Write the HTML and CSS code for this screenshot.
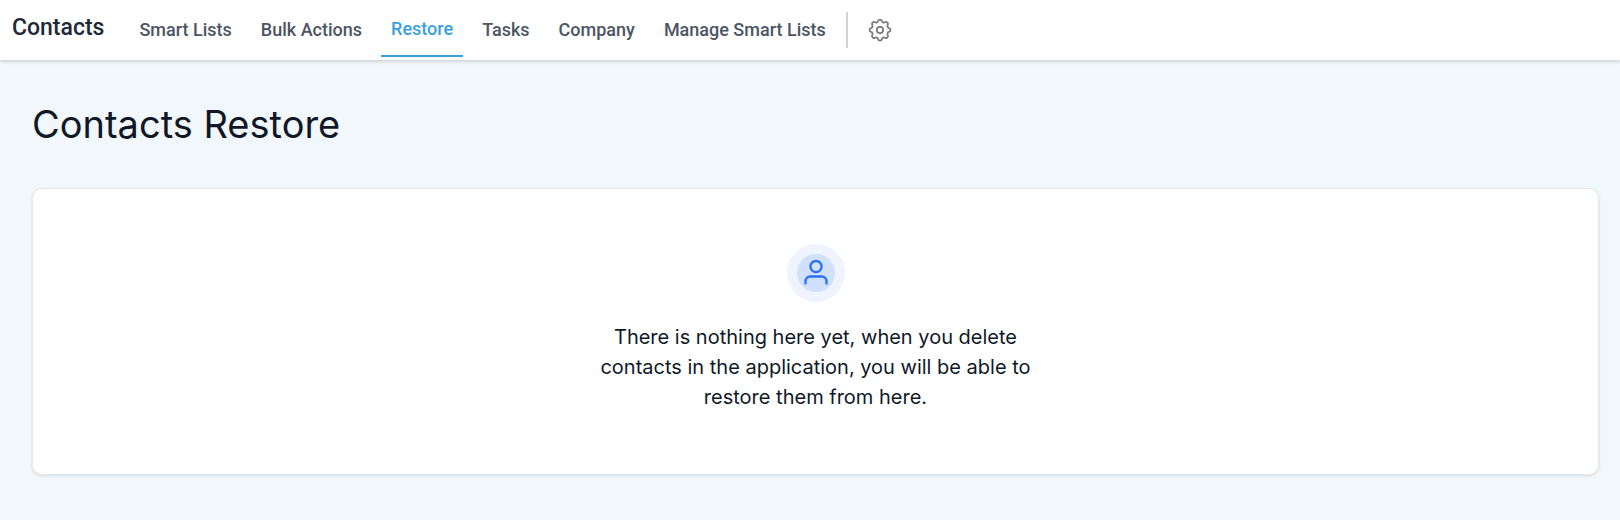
FILE: index.html
```html
<!DOCTYPE html>
<html lang="en">
<head>
    <title>Contacts Restore</title>
    <meta charset="UTF-8">
    <meta name="viewport" content="width=device-width, initial-scale=1">
    <link rel="stylesheet" href="styles.css">
</head>
<body>
    <header class="topbar">
        <span class="topbar-title">Contacts</span>
        <nav class="topbar-nav">
            <a href="#" class="nav-link">Smart Lists</a>
            <a href="#" class="nav-link">Bulk Actions</a>
            <a href="#" class="nav-link active" aria-current="page">Restore</a>
            <a href="#" class="nav-link">Tasks</a>
            <a href="#" class="nav-link">Company</a>
            <a href="#" class="nav-link">Manage Smart Lists</a>
        </nav>
        <button type="button" class="settings-btn" aria-label="Settings">
            <svg width="28" height="28" viewBox="0 0 24 24" fill="none" stroke="currentColor" stroke-width="1.5" stroke-linecap="round" stroke-linejoin="round">
                <path d="M10.325 4.317c.426-1.756 2.924-1.756 3.35 0a1.724 1.724 0 002.573 1.066c1.543-.94 3.31.826 2.37 2.37a1.724 1.724 0 001.065 2.572c1.756.426 1.756 2.924 0 3.35a1.724 1.724 0 00-1.066 2.573c.94 1.543-.826 3.31-2.37 2.37a1.724 1.724 0 00-2.572 1.065c-.426 1.756-2.924 1.756-3.35 0a1.724 1.724 0 00-2.573-1.066c-1.543.94-3.31-.826-2.37-2.37a1.724 1.724 0 00-1.065-2.572c-1.756-.426-1.756-2.924 0-3.35a1.724 1.724 0 001.066-2.573c-.94-1.543.826-3.31 2.37-2.37.996.608 2.296.07 2.572-1.065z"/>
                <circle cx="12" cy="12" r="2.7"/>
            </svg>
        </button>
    </header>

    <main class="content">
        <h1 class="page-title">Contacts Restore</h1>

        <section class="card">
            <div class="empty-icon">
                <svg width="28" height="28" viewBox="0 0 24 24" fill="none" stroke="currentColor" stroke-width="2" stroke-linecap="round" stroke-linejoin="round">
                    <path d="M21 21v-2a4 4 0 0 0-4-4H7a4 4 0 0 0-4 4v2"/>
                    <circle cx="12" cy="6.5" r="4.8"/>
                </svg>
            </div>
            <p class="empty-text">There is nothing here yet, when you delete contacts in the application, you will be able to restore them from here.</p>
        </section>
    </main>
</body>
</html>
```
FILE: styles.css
```css
* {
    box-sizing: border-box;
}

body {
    margin: 0;
    background: #f1f7fa;
    color: #101828;
    font-family: Inter, "Liberation Sans", sans-serif;
}

/* top bar */
.topbar {
    display: flex;
    align-items: center;
    height: 60px;
    padding-left: 12px;
    background: #fff;
    box-shadow: 0 1px 4px rgba(0, 0, 0, 0.2);
    font-family: Roboto, "Liberation Sans", sans-serif;
}

.topbar-title {
    padding-bottom: 6px;
    margin-right: 25px;
    color: #1f2937;
    font-size: 23px;
    font-weight: 500;
}

.topbar-nav {
    display: flex;
    gap: 9px;
    padding-right: 10px;
    border-right: 2px solid #d1d5db;
    height: 36px;
}

.nav-link {
    height: 45px;
    padding: 0 10px;
    color: #4b5563;
    font-size: 18px;
    font-weight: 500;
    line-height: 36px;
    text-decoration: none;
    white-space: nowrap;
}

.nav-link.active {
    border-bottom: 2px solid #38a0db;
    color: #38a0db;
    line-height: 34px;
}

.settings-btn {
    display: flex;
    margin-left: 18px;
    padding: 0;
    border: none;
    background: none;
    color: #7a7a7a;
    cursor: pointer;
}

/* page */
.content {
    padding: 40px 21px 40px 32px;
}

.page-title {
    margin: 0 0 40px;
    font-size: 38px;
    font-weight: 400;
    line-height: 48px;
}

.card {
    display: flex;
    flex-direction: column;
    align-items: center;
    padding: 55px 20px 62px;
    border: 1px solid #e5e9ee;
    border-radius: 10px;
    background: #fff;
    box-shadow: 0 1px 3px rgba(16, 24, 40, 0.12);
}

.empty-icon {
    display: flex;
    align-items: center;
    justify-content: center;
    width: 58px;
    height: 58px;
    border: 10px solid #eff4ff;
    border-radius: 50%;
    background: #d1e0ff;
    color: #2970ff;
}

.empty-text {
    max-width: 460px;
    margin: 20px 0 0;
    font-size: 20px;
    line-height: 30px;
    text-align: center;
}
```
